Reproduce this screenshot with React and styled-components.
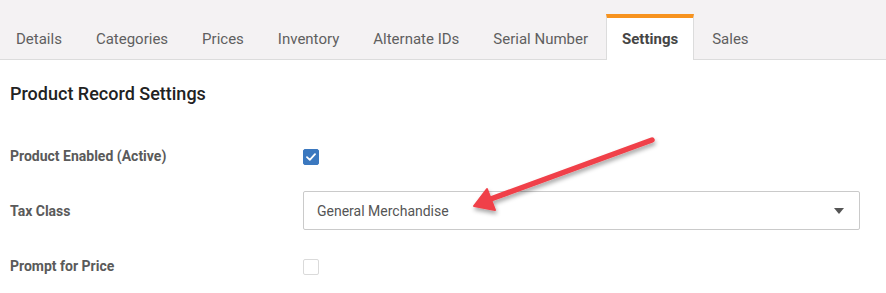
import React from 'react';
import styled, { createGlobalStyle } from 'styled-components';

const GlobalStyle = createGlobalStyle`
  body {
    margin: 0;
    background: #fff;
    font-family: Roboto, 'Liberation Sans', sans-serif;
  }
`;

const Page = styled.div`
  position: relative;
  width: 886px;
  height: 293px;
  overflow: hidden;
`;

const TabBar = styled.div`
  display: flex;
  align-items: flex-end;
  height: 60px;
  background: #f4f2f3;
  border-bottom: 1px solid #dcdcdc;
  box-sizing: border-box;
`;

const Tab = styled.div`
  display: flex;
  align-items: center;
  padding: 0 15px 0 15px;
  margin-right: 2px;
  box-sizing: border-box;
  font-size: 15px;
  color: ${(p) => (p.active ? '#454545' : '#5f5f5f')};
  font-weight: ${(p) => (p.active ? 700 : 400)};
  background: ${(p) => (p.active ? '#fff' : 'transparent')};
  border-top: 4px solid ${(p) => (p.active ? '#f7931e' : 'transparent')};
  border-left: 1px solid ${(p) => (p.active ? '#dcdcdc' : 'transparent')};
  border-right: 1px solid ${(p) => (p.active ? '#dcdcdc' : 'transparent')};
  margin-bottom: ${(p) => (p.active ? '-1px' : '0')};
  height: ${(p) => (p.active ? '46px' : '45px')};
`;

const Content = styled.div`
  padding: 22px 26px 0 10px;
`;

const Heading = styled.h2`
  margin: 0 0 22px;
  font-size: 18px;
  font-weight: 500;
  color: #222;
  line-height: 24px;
`;

const Row = styled.div`
  display: grid;
  grid-template-columns: 293px 1fr;
  align-items: center;
  height: 55px;
`;

const Label = styled.label`
  font-size: 14px;
  font-weight: 700;
  color: #5a5a5a;
`;

const Checkbox = styled.span`
  display: inline-flex;
  align-items: center;
  justify-content: center;
  width: 16px;
  height: 16px;
  vertical-align: middle;
  box-sizing: border-box;
  border-radius: 2px;
  background: ${(p) => (p.checked ? '#3b78bf' : '#fff')};
  border: 1px solid ${(p) => (p.checked ? '#3b78bf' : '#dadada')};
`;

const Select = styled.div`
  display: flex;
  align-items: center;
  justify-content: space-between;
  height: 39px;
  box-sizing: border-box;
  padding: 0 15px 0 13px;
  border: 1px solid #cacaca;
  border-radius: 2px;
  font-size: 14px;
  color: #555;
`;

const Caret = styled.span`
  width: 0;
  height: 0;
  border-left: 5px solid transparent;
  border-right: 5px solid transparent;
  border-top: 6px solid #555;
`;

const Arrow = styled.svg`
  position: absolute;
  left: 0;
  top: 0;
  pointer-events: none;
`;

const tabs = [
  'Details',
  'Categories',
  'Prices',
  'Inventory',
  'Alternate IDs',
  'Serial Number',
  'Settings',
  'Sales',
];

const App = () => {
  return (
    <Page>
      <GlobalStyle />
      <TabBar>
        {tabs.map((t) => (
          <Tab key={t} active={t === 'Settings'}>
            {t}
          </Tab>
        ))}
      </TabBar>
      <Content>
        <Heading>Product Record Settings</Heading>
        <Row>
          <Label>Product Enabled (Active)</Label>
          <div>
            <Checkbox checked>
              <svg width="10" height="8" viewBox="0 0 10 8">
                <path
                  d="M1 4.2 L3.8 6.8 L9 1.2"
                  fill="none"
                  stroke="#fff"
                  strokeWidth="1.8"
                  strokeLinecap="round"
                  strokeLinejoin="round"
                />
              </svg>
            </Checkbox>
          </div>
        </Row>
        <Row>
          <Label>Tax Class</Label>
          <Select>
            General Merchandise
            <Caret />
          </Select>
        </Row>
        <Row>
          <Label>Prompt for Price</Label>
          <div>
            <Checkbox />
          </div>
        </Row>
      </Content>
      <Arrow width="886" height="293">
        <defs>
          <filter id="sh" x="-20%" y="-20%" width="140%" height="140%">
            <feDropShadow dx="1" dy="3" stdDeviation="2" floodColor="#000" floodOpacity="0.35" />
          </filter>
        </defs>
        <g filter="url(#sh)">
          <line x1="652" y1="140" x2="488" y2="200" stroke="#f04048" strokeWidth="5.5" strokeLinecap="round" />
          <path d="M474 206 L487 189 L495 210 Z" fill="#f04048" stroke="#f04048" strokeWidth="2" strokeLinejoin="round" />
        </g>
      </Arrow>
    </Page>
  );
};

export default App;
